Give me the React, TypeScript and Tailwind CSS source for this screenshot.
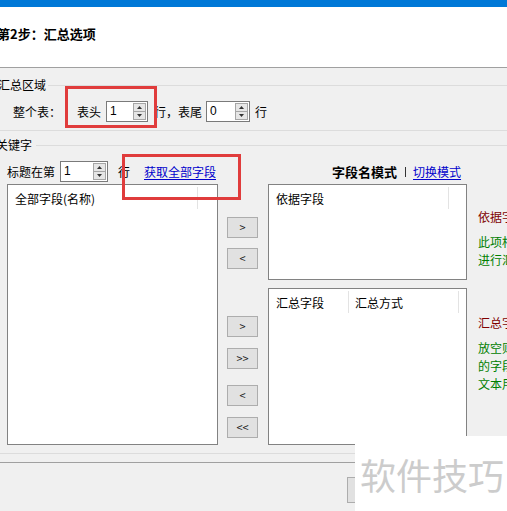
import React from 'react';

// small spin box like the WinForms NumericUpDown
function Spin({ value, className }: { value: string; className: string }) {
  return (
    <div className={`flex h-[21px] shrink-0 border border-[#7a7a7a] bg-white ${className}`}>
      <span className="flex-1 pl-[3px] leading-[19px] font-['Liberation_Sans',sans-serif] text-[12px]">{value}</span>
      <div className="my-[1px] mr-[1px] flex w-[13px] flex-col border border-[#a6a6a6] bg-[#e6e6e6]">
        <div className="flex flex-1 items-center justify-center border-b border-[#a6a6a6]">
          <svg width="5" height="3" viewBox="0 0 5 3">
            <path d="M0 3 L2.5 0 L5 3 Z" fill="#333" />
          </svg>
        </div>
        <div className="flex flex-1 items-center justify-center">
          <svg width="5" height="3" viewBox="0 0 5 3">
            <path d="M0 0 L5 0 L2.5 3 Z" fill="#333" />
          </svg>
        </div>
      </div>
    </div>
  );
}

function MoveButton({ label, className }: { label: string; className: string }) {
  return (
    <div
      className={`flex h-[21px] w-[31px] shrink-0 items-center justify-center border border-[#adadad] bg-[#e1e1e1] text-[11px] leading-none text-[#222] ${className}`}
    >
      {label}
    </div>
  );
}

const RIGHT_NOTES = [
  { text: '依据字段：', color: 'text-[#800000]', cls: 'mt-[24px]' },
  { text: '此项相同的记录', color: 'text-[#008000]', cls: 'mt-[7px]' },
  { text: '进行汇总', color: 'text-[#008000]', cls: '' },
  { text: '汇总字段：', color: 'text-[#800000]', cls: 'mt-[45px]' },
  { text: '放空则汇总全部', color: 'text-[#008000]', cls: 'mt-[7px]' },
  { text: '的字段，数值', color: 'text-[#008000]', cls: '' },
  { text: '文本用计数', color: 'text-[#008000]', cls: '' },
];

export default function App() {
  return (
    <div className="relative h-[511px] w-[507px] overflow-hidden bg-[#f0f0f0] font-['Noto_Sans_CJK_SC',sans-serif] text-[12px] text-black">
      {/* title bar strip */}
      <div className="h-[7px] bg-[#0078d7]" />

      {/* step header */}
      <div className="h-[61px] border-b border-[#a0a0a0] bg-white pt-[19px]">
        <div className="-ml-[3px] text-[13px] font-bold leading-[16px] whitespace-nowrap">第2步：汇总选项</div>
      </div>

      {/* 汇总区域 */}
      <div className="border-b border-[#dcdcdc] pb-[8px]">
        <div className="mt-[10px] flex h-[14px] items-center">
          <span className="-ml-[2px] leading-[14px] whitespace-nowrap">汇总区域</span>
          <div className="ml-[2px] flex-1 border-t border-[#dcdcdc]" />
        </div>
        <div className="mt-[9px] flex h-[21px] items-center whitespace-nowrap">
          <span className="ml-[13px] w-[48px] shrink-0">整个表：</span>
          <span className="ml-[16px] w-[24px] shrink-0">表头</span>
          <Spin value="1" className="ml-[5px] w-[42px]" />
          <span className="ml-[6px] w-[50px] shrink-0">行，表尾</span>
          <Spin value="0" className="ml-[2px] w-[44px]" />
          <span className="ml-[5px]">行</span>
        </div>
      </div>

      {/* 关键字 */}
      <div className="border-b border-[#dcdcdc] pb-[8px]">
        <div className="mt-[7px] flex h-[14px] items-center">
          <span className="-ml-[4px] leading-[14px] whitespace-nowrap">关键字</span>
          <div className="ml-[4px] flex-1 border-t border-[#dcdcdc]" />
        </div>

        <div className="mt-[9px] flex h-[21px] items-center whitespace-nowrap">
          <div className="flex w-[268px] shrink-0 items-center">
            <span className="ml-[7px] w-[48px] shrink-0">标题在第</span>
            <Spin value="1" className="ml-[5px] w-[48px]" />
            <span className="ml-[10px] w-[12px] shrink-0">行</span>
            <span className="ml-[14px] text-[#0000cc] underline underline-offset-2">获取全部字段</span>
          </div>
          <div className="flex items-center">
            <span className="ml-[64px] text-[13px] font-bold">字段名模式</span>
            <span className="ml-[8px] h-[10px] w-[1px] bg-[#333]" />
            <span className="ml-[7px] text-[#0000cc] underline underline-offset-2">切换模式</span>
          </div>
        </div>

        <div className="mt-[2px] flex h-[261px]">
          {/* all fields */}
          <div className="ml-[7px] w-[211px] shrink-0 border border-[#828282] bg-white">
            <div className="flex h-[24px] pt-[2px]">
              <div className="w-[190px] border-r border-[#e3e3e3] pl-[7px] pt-[5px] leading-[14px]">全部字段(名称)</div>
            </div>
          </div>

          {/* move buttons */}
          <div className="ml-[9px] flex w-[31px] shrink-0 flex-col">
            <MoveButton label=">" className="mt-[33px]" />
            <MoveButton label="<" className="mt-[10px]" />
            <MoveButton label=">" className="mt-[47px]" />
            <MoveButton label=">>" className="mt-[11px]" />
            <MoveButton label="<" className="mt-[16px]" />
            <MoveButton label="<<" className="mt-[11px]" />
          </div>

          {/* group / summary lists */}
          <div className="ml-[10px] flex w-[199px] shrink-0 flex-col">
            <div className="h-[96px] border border-[#828282] bg-white">
              <div className="flex h-[24px] pt-[2px]">
                <div className="w-[180px] border-r border-[#e3e3e3] pl-[7px] pt-[5px] leading-[14px]">依据字段</div>
              </div>
            </div>
            <div className="mt-[8px] flex-1 border border-[#828282] bg-white">
              <div className="flex h-[24px] pt-[2px]">
                <div className="w-[80px] border-r border-[#e3e3e3] pl-[7px] pt-[5px] leading-[14px]">汇总字段</div>
                <div className="w-[110px] border-r border-[#e3e3e3] pl-[6px] pt-[5px] leading-[14px]">汇总方式</div>
              </div>
            </div>
          </div>

          {/* notes */}
          <div className="ml-[11px] flex shrink-0 flex-col whitespace-nowrap leading-[18px]">
            {RIGHT_NOTES.map((n, i) => (
              <span key={i} className={`${n.color} ${n.cls}`}>
                {n.text}
              </span>
            ))}
          </div>
        </div>
      </div>

      {/* bottom separator + buttons */}
      <div className="mt-[8px] border-t border-[#a0a0a0] pt-[14px]">
        <div className="ml-[347px] h-[26px] w-[75px] border border-[#adadad] bg-[#e1e1e1]" />
      </div>

      {/* annotation boxes */}
      <div className="absolute left-[65px] top-[86px] h-[42px] w-[92px] border-[3px] border-[#e03c3c]" />
      <div className="absolute left-[122px] top-[154px] h-[46px] w-[119px] border-[3px] border-[#e03c3c]" />

      {/* watermark */}
      <div className="absolute bottom-0 right-0 flex h-[75px] w-[152px] items-center bg-white pl-[5px] text-[36px] leading-none text-[#cccccc] whitespace-nowrap">
        软件技巧
      </div>
    </div>
  );
}
